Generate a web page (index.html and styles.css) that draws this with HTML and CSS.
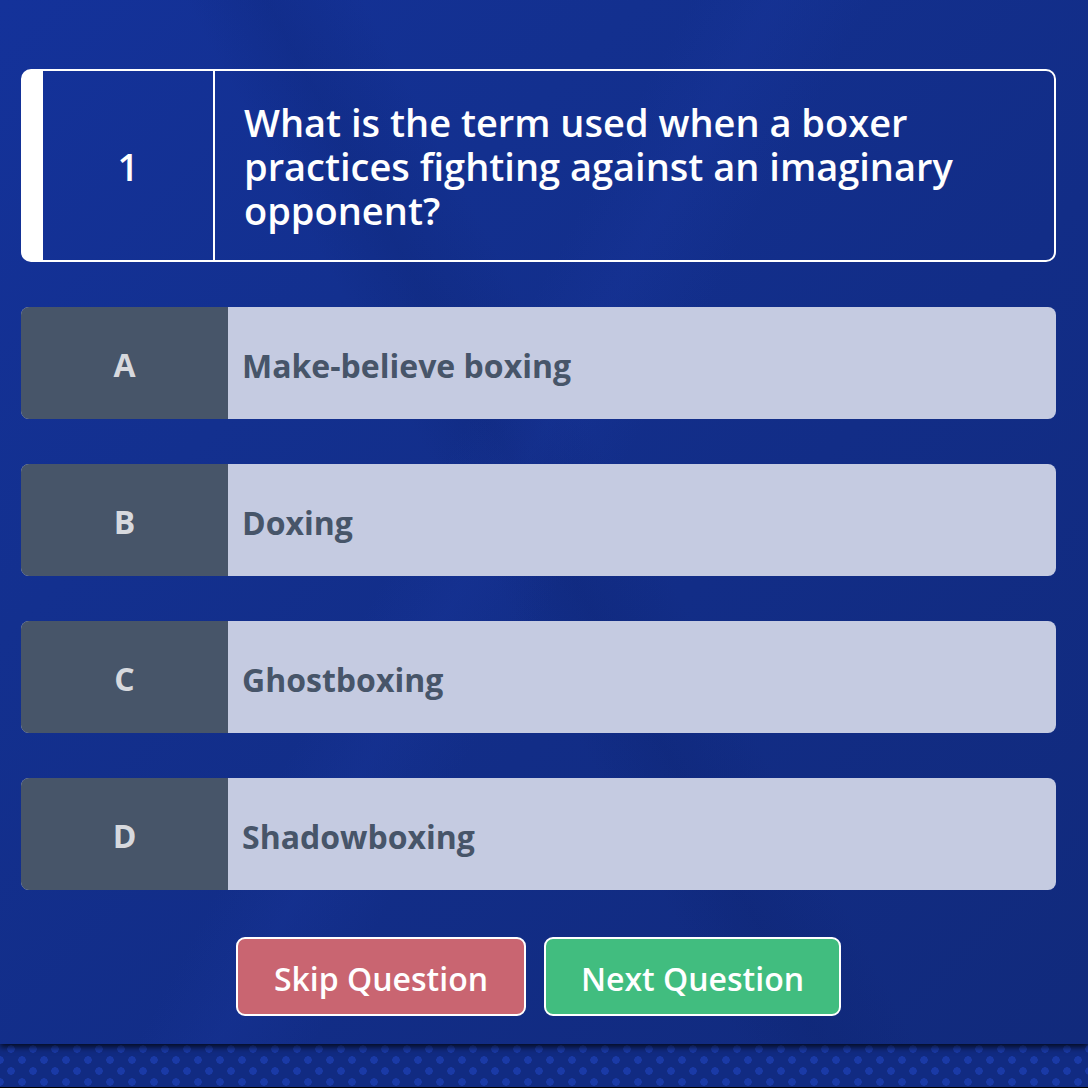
FILE: index.html
```html
<!DOCTYPE html>
<html lang="en">
<head>
<meta charset="utf-8">
<title>Quiz</title>
<link rel="stylesheet" href="styles.css">
</head>
<body>
<div class="page">
  <main class="panel">
    <section class="question">
      <div class="q-num">1</div>
      <div class="q-text">What is the term used when a boxer practices fighting against an imaginary opponent?</div>
    </section>
    <ul class="answers">
      <li class="answer"><span class="letter">A</span><span class="text">Make-believe boxing</span></li>
      <li class="answer"><span class="letter">B</span><span class="text">Doxing</span></li>
      <li class="answer"><span class="letter">C</span><span class="text">Ghostboxing</span></li>
      <li class="answer"><span class="letter">D</span><span class="text">Shadowboxing</span></li>
    </ul>
    <div class="actions">
      <button class="btn btn-skip">Skip Question</button>
      <button class="btn btn-next">Next Question</button>
    </div>
  </main>
  <footer class="strip"></footer>
</div>
</body>
</html>
```

FILE: styles.css
```css
* { box-sizing: border-box; }
html, body { margin: 0; padding: 0; }
body {
  width: 1088px;
  height: 1088px;
  overflow: hidden;
  font-family: "Open Sans", "Noto Sans", sans-serif;
  background: #122c86;
}
.page {
  width: 1088px;
  height: 1088px;
  display: flex;
  flex-direction: column;
  background: #112c84;
}
.panel {
  height: 1044px;
  padding: 69px 32px 0 21px;
  display: flex;
  flex-direction: column;
  position: relative;
  z-index: 1;
  box-shadow: 0 3px 6px rgba(0, 0, 0, 0.75);
  background:
    linear-gradient(118deg, rgba(30,60,170,0) 42%, rgba(30,60,170,0.18) 47%, rgba(30,60,170,0) 53%),
    linear-gradient(62deg, rgba(10,30,100,0) 45%, rgba(10,30,100,0.18) 50%, rgba(10,30,100,0) 56%),
    linear-gradient(135deg, #14329a 0%, #13308f 30%, #122d87 60%, #112a7c 100%);
}
.question {
  height: 193px;
  display: flex;
  border: 2px solid #fff;
  border-left: 22px solid #fff;
  border-radius: 10px;
  color: #fff;
  font-weight: 600;
}
.q-num {
  width: 172px;
  flex: none;
  border-right: 2px solid #fff;
  display: flex;
  align-items: center;
  justify-content: center;
  font-size: 37px;
  padding-top: 2px;
}
.q-text {
  flex: 1;
  display: flex;
  align-items: center;
  padding: 0 40px 0 29px;
  font-size: 38px;
  line-height: 44px;
}
.answers {
  list-style: none;
  margin: 45px 0 0;
  padding: 0;
  display: flex;
  flex-direction: column;
  gap: 45px;
}
.answer {
  height: 112px;
  display: flex;
  border-radius: 8px;
  overflow: hidden;
  background: #c5cbe1;
  font-weight: 700;
  font-size: 32px;
}
.letter {
  width: 207px;
  flex: none;
  background: #475569;
  color: #d7d9de;
  display: flex;
  align-items: center;
  justify-content: center;
  padding-top: 3px;
}
.text {
  display: flex;
  align-items: center;
  padding: 4px 0 0 14px;
  color: #475569;
}
.actions {
  margin-top: 47px;
  display: flex;
  justify-content: center;
  gap: 18px;
}
.btn {
  height: 79px;
  padding: 4px 36px 0;
  border: 2px solid #fff;
  border-radius: 9px;
  color: #fff;
  font-family: inherit;
  font-weight: 600;
  font-size: 32px;
  cursor: pointer;
}
.btn-skip { background: #c96571; }
.btn-next { background: #41bd7f; padding: 4px 35px 0; }
.strip {
  flex: 1;
  background-color: #112b82;
  background-image:
    radial-gradient(circle, #1a3aa6 3.5px, rgba(0,0,0,0) 4px),
    radial-gradient(circle, #1a3aa6 3.5px, rgba(0,0,0,0) 4px);
  background-size: 22px 22px, 22px 22px;
  background-position: 0 -6px, 11px 5px;
  border-bottom: 1px solid #000;
}
```
